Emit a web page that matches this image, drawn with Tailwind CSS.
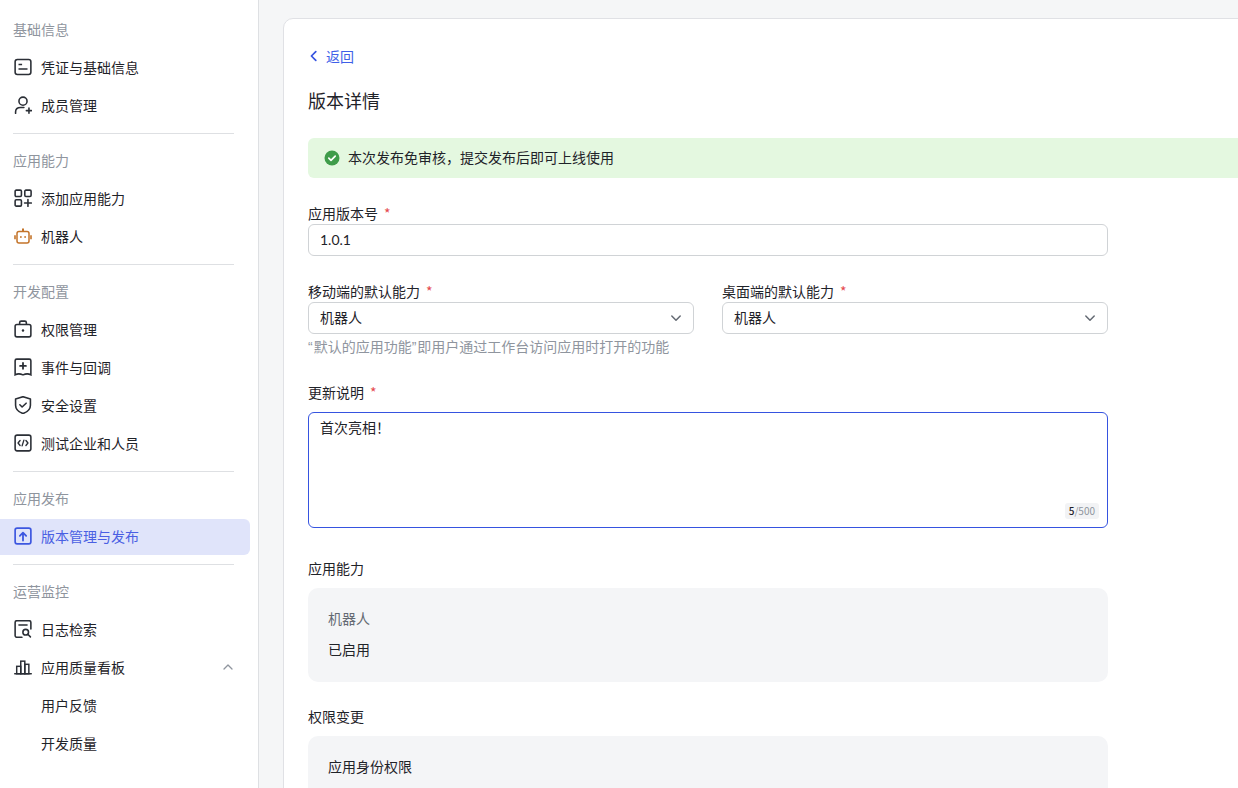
<!DOCTYPE html>
<html lang="zh-CN">
<head>
  <meta charset="UTF-8" />
  <title>版本详情</title>
  <script src="https://cdn.jsdelivr.net/npm/@tailwindcss/browser@4"></script>
</head>
<body class="bg-[#f5f6f7] text-[#1f2329] text-sm font-['Noto_Sans_CJK_SC','Noto_Sans',sans-serif] h-[788px] overflow-hidden">
<div class="flex h-[788px] overflow-hidden">

  <!-- Sidebar -->
  <aside class="w-[259px] shrink-0 h-full bg-white border-r border-[#dee0e3] pt-[18px]">
    <div class="pl-[13px] h-[22px] leading-[22px] mb-[10px] text-[#8f959e]">基础信息</div>
    <a class="flex items-center w-[250px] h-9 mb-[2px] pl-[14px] pb-[2px] gap-[9px]">
      <svg class="w-[18px] h-[18px] shrink-0" viewBox="1 1 16 16" fill="none" stroke="#2b2f36" stroke-width="1.4"><rect x="2" y="2.400" width="14" height="13.200" rx="2"/><path d="M5 6.800h3.200M5 10.800h8"/></svg>
      <span>凭证与基础信息</span>
    </a>
    <a class="flex items-center w-[250px] h-9 mb-[2px] pl-[14px] pb-[2px] gap-[9px]">
      <svg class="w-[18px] h-[18px] shrink-0" viewBox="1 1 16 16" fill="none" stroke="#2b2f36" stroke-width="1.4" stroke-linecap="round"><circle cx="9" cy="5.600" r="3.600"/><path d="M2.400 16.400v-1.200c0-2.600 2-4 4.400-4h3"/><path d="M12 14h4.600M14.300 11.700v4.600"/></svg>
      <span>成员管理</span>
    </a>
    <div class="ml-[13px] w-[221px] h-px bg-[#dee0e3] mt-[9px] mb-[15px]"></div>

    <div class="pl-[13px] h-[22px] leading-[22px] mb-[10px] text-[#8f959e]">应用能力</div>
    <a class="flex items-center w-[250px] h-9 mb-[2px] pl-[14px] pb-[2px] gap-[9px]">
      <svg class="w-[18px] h-[18px] shrink-0" viewBox="1 1 16 16" fill="none" stroke="#2b2f36" stroke-width="1.4" stroke-linecap="round"><rect x="2" y="2" width="5.600" height="5.600" rx="1"/><rect x="10.600" y="2" width="5.600" height="5.600" rx="1"/><rect x="2" y="10.600" width="5.600" height="5.600" rx="1"/><path d="M10.400 13.400h6M13.400 10.400v6"/></svg>
      <span>添加应用能力</span>
    </a>
    <a class="flex items-center w-[250px] h-9 mb-[2px] pl-[14px] pb-[2px] gap-[9px]">
      <svg class="w-[18px] h-[18px] shrink-0" viewBox="0 0 18 18" fill="none" stroke="#c4742a" stroke-width="1.500"><rect x="3" y="4.400" width="12" height="11.600" rx="2"/><path d="M9 1.600v2.800" stroke-width="2"/><path d="M1 8.200v4M17 8.200v4" stroke-width="1.600"/><circle cx="6.900" cy="10" r=".9" fill="#c4742a" stroke="none"/><circle cx="11.100" cy="10" r=".9" fill="#c4742a" stroke="none"/></svg>
      <span>机器人</span>
    </a>
    <div class="ml-[13px] w-[221px] h-px bg-[#dee0e3] mt-[9px] mb-[15px]"></div>

    <div class="pl-[13px] h-[22px] leading-[22px] mb-[10px] text-[#8f959e]">开发配置</div>
    <a class="flex items-center w-[250px] h-9 mb-[2px] pl-[14px] pb-[2px] gap-[9px]">
      <svg class="w-[18px] h-[18px] shrink-0" viewBox="1 1 16 16" fill="none" stroke="#2b2f36" stroke-width="1.4"><rect x="2" y="5" width="14" height="11" rx="1.600"/><path d="M6 5V3.400C6 2.600 6.600 2 7.400 2h3.200c.8 0 1.400.6 1.400 1.400V5"/><circle cx="9" cy="10.400" r="1.100" fill="#2b2f36" stroke="none"/></svg>
      <span>权限管理</span>
    </a>
    <a class="flex items-center w-[250px] h-9 mb-[2px] pl-[14px] pb-[2px] gap-[9px]">
      <svg class="w-[18px] h-[18px] shrink-0" viewBox="1 1 16 16" fill="none" stroke="#2b2f36" stroke-width="1.4" stroke-linecap="round"><path d="M3.400 2h11.200c.8 0 1.400.6 1.400 1.400V16c-2-1.200-4.400-1.200-7 0-2.600-1.200-5-1.200-7 0V3.400C2 2.600 2.600 2 3.400 2z"/><path d="M6.400 8h5.200M9 5.400v5.200" stroke-width="1.600"/></svg>
      <span>事件与回调</span>
    </a>
    <a class="flex items-center w-[250px] h-9 mb-[2px] pl-[14px] pb-[2px] gap-[9px]">
      <svg class="w-[18px] h-[18px] shrink-0" viewBox="1 1 16 16" fill="none" stroke="#2b2f36" stroke-width="1.4" stroke-linecap="round" stroke-linejoin="round"><path d="M9 1.600l6.600 2v5.600c0 3.600-2.800 6-6.600 7.400-3.800-1.400-6.600-3.800-6.600-7.400V3.600z"/><path d="M6.200 8.800l2 2 3.600-3.400"/></svg>
      <span>安全设置</span>
    </a>
    <a class="flex items-center w-[250px] h-9 mb-[2px] pl-[14px] pb-[2px] gap-[9px]">
      <svg class="w-[18px] h-[18px] shrink-0" viewBox="1 1 16 16" fill="none" stroke="#2b2f36" stroke-width="1.4" stroke-linecap="round" stroke-linejoin="round"><rect x="2" y="2" width="14" height="14" rx="1.800"/><path d="M6.400 6.800L4.600 9l1.800 2.200M11.600 6.800L13.400 9l-1.800 2.200M9.800 6.400L8.200 11.600" stroke-width="1.200"/></svg>
      <span>测试企业和人员</span>
    </a>
    <div class="ml-[13px] w-[221px] h-px bg-[#dee0e3] mt-[9px] mb-[15px]"></div>

    <div class="pl-[13px] h-[22px] leading-[22px] mb-[10px] text-[#8f959e]">应用发布</div>
    <a class="flex items-center w-[250px] h-9 mb-[2px] pl-[14px] pb-[2px] gap-[9px] bg-[#e0e4fa] rounded-r-md text-[#4a5fe3]">
      <svg class="w-[18px] h-[18px] shrink-0" viewBox="1 1 16 16" fill="none" stroke="#3d57e0" stroke-width="1.500" stroke-linecap="round" stroke-linejoin="round"><rect x="2" y="2" width="14" height="14" rx="1.800"/><path d="M9 13V6M6.200 8.800L9 6l2.800 2.800" stroke-width="1.600"/></svg>
      <span>版本管理与发布</span>
    </a>
    <div class="ml-[13px] w-[221px] h-px bg-[#dee0e3] mt-[9px] mb-[15px]"></div>

    <div class="pl-[13px] h-[22px] leading-[22px] mb-[10px] text-[#8f959e]">运营监控</div>
    <a class="flex items-center w-[250px] h-9 mb-[2px] pl-[14px] pb-[2px] gap-[9px]">
      <svg class="w-[18px] h-[18px] shrink-0" viewBox="1 1 16 16" fill="none" stroke="#2b2f36" stroke-width="1.400" stroke-linecap="round"><path d="M8 16.400H3.600C2.700 16.400 2 15.700 2 14.800V3.200C2 2.300 2.700 1.600 3.600 1.600h10.800c.9 0 1.600.7 1.600 1.600V9"/><path d="M5.400 5.400h7.200"/><circle cx="11.400" cy="11.800" r="2.500"/><path d="M13.300 13.700l2.300 2.300"/></svg>
      <span>日志检索</span>
    </a>
    <a class="flex items-center w-[250px] h-9 mb-[2px] pl-[14px] pb-[2px] gap-[9px]">
      <svg class="w-[18px] h-[18px] shrink-0" viewBox="1 1 16 16" fill="none" stroke="#2b2f36" stroke-width="1.300" stroke-linecap="round"><path d="M1.600 15h14.800"/><rect x="3.400" y="8.400" width="3.600" height="6.600"/><rect x="7" y="3.800" width="3.600" height="11.200"/><rect x="10.600" y="6.600" width="3.600" height="8.400"/></svg>
      <span>应用质量看板</span>
      <svg class="w-3 h-3 ml-auto mr-[16px]" viewBox="0 0 12 12" fill="none" stroke="#8f959e" stroke-width="1.300" stroke-linecap="round" stroke-linejoin="round"><path d="M2 8l4-4 4 4"/></svg>
    </a>
    <a class="flex items-center w-[250px] h-9 mb-[2px] pl-[41px] pb-[2px]">用户反馈</a>
    <a class="flex items-center w-[250px] h-9 mb-[2px] pl-[41px] pb-[2px]">开发质量</a>
  </aside>

  <!-- Main -->
  <main class="flex-1 min-w-0 pl-[24px] pt-[18px] overflow-hidden">
    <div class="w-[1100px] bg-white border border-[#e0e1e5] rounded-[10px] pl-6 pr-6 pt-[26px] pb-10">
      <a class="flex items-center h-[22px] text-[#3f5fe8]">
        <svg class="w-[12px] h-[12px] mr-[6px]" viewBox="0 0 12 12" fill="none" stroke="#3654e0" stroke-width="1.700" stroke-linecap="round" stroke-linejoin="round"><path d="M7.800 1.600L3.400 6l4.400 4.400"/></svg>
        <span>返回</span>
      </a>
      <h1 class="text-lg font-normal leading-[26px] mt-[20px]">版本详情</h1>

      <div class="flex items-center h-10 mt-[25px] pl-[16px] bg-[#e4f8e0] rounded-md">
        <svg class="w-4 h-4 mr-2" viewBox="0 0 16 16"><circle cx="8" cy="8" r="7.500" fill="#3f9c4a"/><path d="M4.800 8.200l2.200 2.200 4.200-4.200" fill="none" stroke="#fff" stroke-width="1.700" stroke-linecap="round" stroke-linejoin="round"/></svg>
        <span class="pb-[2px]">本次发布免审核，提交发布后即可上线使用</span>
      </div>

      <div class="w-[800px]">
        <div class="h-[22px] leading-[22px] mt-[24px]">应用版本号<span class="text-[#e5484d] ml-[6px]">*</span></div>
        <div class="flex items-center h-8 px-[11px] border border-[#d0d3d6] rounded-md font-['Lato',sans-serif]">1.0.1</div>

        <div class="grid grid-cols-2 gap-x-[28px] mt-[24px]">
          <div>
            <div class="h-[22px] leading-[22px]">移动端的默认能力<span class="text-[#e5484d] ml-[6px]">*</span></div>
            <div class="flex items-center justify-between h-8 px-[11px] border border-[#d0d3d6] rounded-md">
              <span class="pb-[2px]">机器人</span>
              <svg class="w-3 h-3" viewBox="0 0 12 12" fill="none" stroke="#646a73" stroke-width="1.500" stroke-linecap="round" stroke-linejoin="round"><path d="M1.800 4l4.200 4.200L10.200 4"/></svg>
            </div>
          </div>
          <div>
            <div class="h-[22px] leading-[22px]">桌面端的默认能力<span class="text-[#e5484d] ml-[6px]">*</span></div>
            <div class="flex items-center justify-between h-8 px-[11px] border border-[#d0d3d6] rounded-md">
              <span class="pb-[2px]">机器人</span>
              <svg class="w-3 h-3" viewBox="0 0 12 12" fill="none" stroke="#646a73" stroke-width="1.500" stroke-linecap="round" stroke-linejoin="round"><path d="M1.800 4l4.200 4.200L10.200 4"/></svg>
            </div>
          </div>
        </div>
        <p class="h-[22px] leading-[22px] mt-[1px] text-[#8f959e]"><span class="font-['Liberation_Sans'] pr-px">“</span>默认的应用功能<span class="font-['Liberation_Sans'] pr-px">”</span>即用户通过工作台访问应用时打开的功能</p>

        <div class="h-[22px] leading-[22px] mt-[24px]">更新说明<span class="text-[#e5484d] ml-[6px]">*</span></div>
        <div class="relative h-[116px] mt-[9px] px-[11px] py-[3px] border border-[#3654e0] rounded-md leading-[22px]">
          首次亮相！
          <span class="absolute right-[8px] bottom-[8px] h-4 px-[4px] leading-4 text-[10px] bg-[#f2f3f5] rounded-[3px] text-[#8f959e]"><b class="font-medium text-[#1f2329]">5</b>/500</span>
        </div>

        <div class="h-[22px] leading-[22px] mt-[29px]">应用能力</div>
        <div class="h-[94px] mt-[9px] px-5 pt-[19px] bg-[#f4f5f7] rounded-[10px]">
          <div class="h-[22px] leading-[22px] text-[#646a73]">机器人</div>
          <div class="h-[22px] leading-[22px] mt-[9px]">已启用</div>
        </div>

        <div class="h-[22px] leading-[22px] mt-[23px]">权限变更</div>
        <div class="h-[94px] mt-[9px] px-5 pt-[19px] bg-[#f4f5f7] rounded-[10px]">
          <div class="h-[22px] leading-[22px]">应用身份权限</div>
        </div>
      </div>
    </div>
  </main>
</div>
</body>
</html>
